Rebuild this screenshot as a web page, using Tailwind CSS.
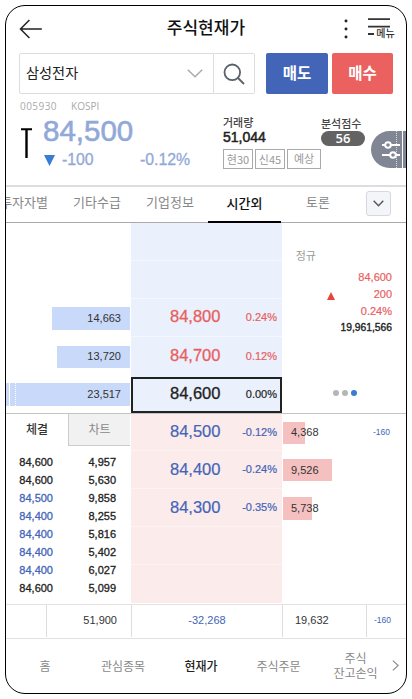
<!DOCTYPE html>
<html lang="ko">
<head>
    <meta charset="UTF-8">
    <meta name="viewport" content="width=device-width, initial-scale=1.0">
    <title>주식현재가</title>
    <script src="https://cdn.jsdelivr.net/npm/@tailwindcss/browser@4"></script>
</head>
<body class="bg-white font-['Liberation_Sans','Noto_Sans_CJK_KR',sans-serif]">
    <div class="ml-[5px] mt-[5px] w-[402px] h-[689px] border border-black rounded-[20px] overflow-hidden flex flex-col whitespace-nowrap leading-none text-[#333]">

        <!-- Header -->
        <header class="h-[47px] shrink-0 flex items-center pl-[13px] pr-[9px] pb-[2px]">
            <svg class="w-6 h-5" viewBox="0 0 24 20" fill="none" stroke="#222" stroke-width="1.5"><path d="M10.5 1 1.5 10l9 9M1.5 10H23"/></svg>
            <h1 class="ml-[124px] w-[81px] text-[17px] font-medium text-[#111]">주식현재가</h1>
            <svg class="ml-[97px] w-1 h-5" viewBox="0 0 4 20" fill="#222"><circle cx="2" cy="2" r="1.5"/><circle cx="2" cy="10" r="1.5"/><circle cx="2" cy="18" r="1.5"/></svg>
            <div class="ml-[20px] w-[29px] flex flex-col">
                <svg class="w-[22px] h-[10px]" viewBox="0 0 22 10" fill="none" stroke="#333" stroke-width="1.7"><path d="M0 1.2h22M0 8.7h22"/></svg>
                <div class="flex items-center mt-px">
                    <span class="w-[6px] h-[1.5px] bg-[#333]"></span>
                    <span class="ml-[2px] text-[10px] font-medium">메뉴</span>
                </div>
            </div>
        </header>

        <!-- Search and order buttons -->
        <div class="h-[41px] shrink-0 flex pl-[13px]">
            <div class="w-[195px] border border-[#ddd] rounded-l-[2px] flex items-center justify-between pl-[6px] pr-[10px]">
                <span class="text-[14.2px] text-[#222]">삼성전자</span>
                <svg class="w-4 h-[9px]" viewBox="0 0 16 9" fill="none" stroke="#aaa" stroke-width="1.5"><path d="m.8.8 7.2 7 7.2-7"/></svg>
            </div>
            <div class="w-[41px] border border-l-0 border-[#ddd] rounded-r-[2px] flex items-center justify-center">
                <svg class="w-[22px] h-[22px]" viewBox="0 0 22 22" fill="none" stroke="#5b606b" stroke-width="1.8"><circle cx="9.3" cy="9.3" r="7.8"/><path d="m15 15 6 6"/></svg>
            </div>
            <button class="ml-[11px] w-[62px] rounded-[2px] bg-[#4265b8] text-white text-[15.5px] font-bold">매도</button>
            <button class="ml-1 w-[61px] rounded-[2px] bg-[#ea615f] text-white text-[15.5px] font-bold">매수</button>
        </div>

        <!-- Quote summary -->
        <section class="h-[91px] shrink-0 flex pl-[14px]">
            <div class="w-[203px]">
                <div class="mt-[6px] h-3 flex items-center gap-[14px] text-[10px] text-[#aaa] font-['Open_Sans','Noto_Sans',sans-serif]"><span class="tracking-[0.45px]">005930</span><span>KOSPI</span></div>
                <div class="flex">
                    <svg class="mt-[16px] ml-px w-[11px] h-[30px]" viewBox="0 0 11 30" fill="none" stroke="#000"><path d="M0 1.2h11" stroke-width="2"/><path d="M5.5 1v29" stroke-width="2.4"/></svg>
                    <div class="ml-[11px] mt-[3px] text-[#92a9d8]">
                        <div class="text-[29.5px] h-[32px] flex items-center [-webkit-text-stroke:0.6px]">84,500</div>
                        <div class="flex items-center h-[22px] mt-[2px] text-[15.8px] [-webkit-text-stroke:0.3px]">
                            <svg class="ml-[1px] w-[11px] h-[11px]" viewBox="0 0 11 11" fill="#377cd6"><path d="M0 0h11L5.5 11z"/></svg>
                            <span class="ml-[7px] w-[31px]">-100</span>
                            <span class="ml-[47px]">-0.12%</span>
                        </div>
                    </div>
                </div>
            </div>
            <div class="w-[98px] pt-[23px]">
                <div class="h-[12px] flex items-center text-[11px] font-medium text-[#444]">거래량</div>
                <div class="h-4 flex items-center text-[14px] text-[#222] [-webkit-text-stroke:0.5px]">51,044</div>
                <div class="mt-[4px] flex gap-[2px] text-[11px] text-[#999]">
                    <span class="w-[34px] h-[20px] border border-[#aaa] flex items-center justify-center font-['Noto_Sans_CJK_KR',sans-serif]">현30</span>
                    <span class="w-[34px] h-[20px] border border-[#aaa] flex items-center justify-center font-['Noto_Sans_CJK_KR',sans-serif]">신45</span>
                    <span class="w-[34px] h-[20px] shrink-0 border border-[#aaa] flex items-center justify-center">예상</span>
                </div>
            </div>
            <div class="w-[49px] pt-[24px]">
                <div class="h-[12px] flex items-center text-[11px] font-medium text-[#444]">분석점수</div>
                <div class="mt-[1px] w-[44px] h-[15px] rounded-full bg-[#636363] text-white text-[13px] font-semibold font-['Open_Sans',sans-serif] flex items-center justify-center">56</div>
            </div>
            <div class="ml-[1px] mt-[37px] w-[35px] h-[37px] shrink-0 relative rounded-l-full bg-[#818694] flex items-center">
                <svg class="ml-[10px] w-[21px] h-5 shrink-0" viewBox="0 0 21 20" fill="none" stroke="#fff" stroke-width="2"><path d="M1 5h3M10 5h9M1 15h8M15 15h4"/><circle cx="7" cy="5" r="2.8"/><circle cx="12" cy="15" r="2.8"/></svg>
                <span class="absolute left-[25px] inset-y-0 border-l border-dotted border-white/70"></span>
                <span class="absolute left-[31px] inset-y-0 w-px bg-white"></span>
            </div>
        </section>

        <!-- Tabs -->
        <nav class="h-[38px] shrink-0 border-t-2 border-[#ddd] border-b border-b-[#aaa] flex text-[13px] text-[#888]">
            <span class="w-[42px] flex items-center justify-end pb-1">투자자별</span>
            <span class="w-[98px] flex items-center justify-center pb-1">기타수급</span>
            <span class="w-[48px] flex items-center justify-center pb-1">기업정보</span>
            <span class="ml-[14px] w-[73px] h-[36px] border-b-2 border-black flex items-center justify-center pb-[2px] font-medium text-[#111]">시간외</span>
            <span class="w-[74px] flex items-center justify-center pb-1">토론</span>
            <span class="ml-[11px] mt-[4px] w-[25px] h-[25px] border border-[#d5d8e0] rounded-[3px] bg-[#f4f5f9] flex items-center justify-center">
                <svg class="w-[11px] h-[7px]" viewBox="0 0 11 7" fill="none" stroke="#555" stroke-width="1.4"><path d="m.7.7 4.8 5 4.8-5"/></svg>
            </span>
        </nav>

        <!-- Ask side -->
        <section class="h-[191px] shrink-0 border-b border-[#c4c4c4] flex text-[11px]">
            <div class="w-[125px] pt-[76px]">
                <div class="h-[38px] flex items-center justify-end pr-px"><span class="w-[78px] h-[23px] bg-[#c9d9f9] flex items-center justify-end pr-[9px]">14,663</span></div>
                <div class="h-[39px] flex items-center justify-end pr-px"><span class="w-[73px] h-[22px] bg-[#c9d9f9] flex items-center justify-end pr-[9px]">13,720</span></div>
                <div class="h-[37px] flex items-center justify-end pr-px">
                    <span class="relative w-full h-[23px] bg-[#c9d9f9] flex items-center justify-end pr-[9px]">23,517
                        <span class="absolute left-[3px] inset-y-0 w-px bg-white"></span>
                        <span class="absolute left-[9px] inset-y-0 border-l border-dotted border-white"></span>
                    </span>
                </div>
            </div>
            <div class="w-[151px] bg-[#eaf1fc]">
                <div class="h-[38px] border-b border-[#f4f8fe]"></div>
                <div class="h-[38px] border-b border-[#f4f8fe]"></div>
                <div class="h-[38px] border-b border-[#f4f8fe] flex items-center justify-between pl-[39px] pr-[5px] text-[#e8605e]"><span class="pb-[2px] text-[16.5px] [-webkit-text-stroke:0.3px]">84,800</span><span class="[-webkit-text-stroke:0.2px]">0.24%</span></div>
                <div class="h-[39px] flex items-center justify-between pl-[39px] pr-[5px] text-[#e8605e]"><span class="pb-[2px] text-[16.5px] [-webkit-text-stroke:0.3px]">84,700</span><span class="[-webkit-text-stroke:0.2px]">0.12%</span></div>
                <div class="mt-px h-[36px] border-2 border-[#222] flex items-center justify-between pl-[37px] pr-[3px] text-[#222]"><span class="pb-[3px] text-[16.5px] [-webkit-text-stroke:0.3px]">84,600</span><span class="pb-[2px] [-webkit-text-stroke:0.2px]">0.00%</span></div>
            </div>
            <div class="w-[110px] flex flex-col items-end text-[#e8605e] [-webkit-text-stroke:0.2px]">
                <div class="mt-[27px] mr-[76px] h-[13px] flex items-center text-[11px] text-[#999] [-webkit-text-stroke:0px]">정규</div>
                <div class="mt-[6px] h-[17px] flex items-center">84,600</div>
                <div class="h-[17px] flex items-center">
                    <svg class="mr-[39px] mt-[2px] w-2 h-2" viewBox="0 0 8 8" fill="#e8433f"><path d="M4 0l4 8H0z"/></svg>200
                </div>
                <div class="h-[17px] flex items-center">0.24%</div>
                <div class="h-[17px] flex items-center text-[#222] text-[10.3px] [-webkit-text-stroke:0.35px]">19,961,566</div>
                <div class="mt-[53px] mr-[35px] flex gap-[3px]">
                    <span class="size-[6px] rounded-full bg-[#b5b5b5]"></span>
                    <span class="size-[6px] rounded-full bg-[#b5b5b5]"></span>
                    <span class="size-[6px] rounded-full bg-[#377cd6]"></span>
                </div>
            </div>
        </section>

        <!-- Bid side -->
        <section class="h-[189px] shrink-0 flex text-[11px]">
            <div class="w-[125px]">
                <div class="flex h-[32px] text-[12px] pr-px">
                    <span class="w-[62px] flex items-center justify-center font-medium">체결</span>
                    <span class="w-[62px] border-l border-b border-[#ccc] bg-[#f1f1f1] text-[#888] flex items-center justify-center">차트</span>
                </div>
                <!-- Executions -->
                <div class="mt-[7px] grid grid-cols-[47px_63px] auto-rows-[18.1px] items-center text-right text-[#222] [-webkit-text-stroke:0.3px]">
                    <span>84,600</span><span>4,957</span>
                    <span>84,600</span><span>5,630</span>
                    <span class="text-[#4265b8]">84,500</span><span>9,858</span>
                    <span class="text-[#4265b8]">84,400</span><span>8,255</span>
                    <span class="text-[#4265b8]">84,400</span><span>5,816</span>
                    <span class="text-[#4265b8]">84,400</span><span>5,402</span>
                    <span class="text-[#4265b8]">84,400</span><span>6,027</span>
                    <span>84,600</span><span>5,099</span>
                </div>
            </div>
            <div class="w-[151px] bg-[#fcebeb] text-[#4265b8] [-webkit-text-stroke:0.2px]">
                <div class="h-[37px] border-b border-[#fef3f3] flex items-center justify-between pl-[39px] pr-[5px]"><span class="pb-[2px] text-[16.5px]">84,500</span><span>-0.12%</span></div>
                <div class="h-[38px] border-b border-[#fef3f3] flex items-center justify-between pl-[39px] pr-[5px]"><span class="pb-px text-[16.5px]">84,400</span><span>-0.24%</span></div>
                <div class="h-[38px] border-b border-[#fef3f3] flex items-center justify-between pl-[39px] pr-[5px]"><span class="pb-px text-[16.5px]">84,300</span><span>-0.35%</span></div>
                <div class="h-[38px] border-b border-[#fef3f3]"></div>
            </div>
            <div class="w-[124px] pl-px">
                <div class="h-[37px] flex items-center">
                    <div class="w-[22px] h-[22px] bg-[#f5c0c0] flex items-center pl-2">4,368</div>
                    <span class="ml-auto mr-[16px] text-[8.5px] text-[#4265b8]">-160</span>
                </div>
                <div class="h-[38px] flex items-center"><div class="w-[49px] h-[22px] bg-[#f5c0c0] flex items-center pl-2">9,526</div></div>
                <div class="h-[38px] flex items-center"><div class="w-[29px] h-[23px] bg-[#f5c0c0] flex items-center pl-2">5,738</div></div>
            </div>
        </section>

        <!-- Totals -->
        <div class="h-[35px] shrink-0 border-y border-[#e2e2e2] flex text-[11px] mt-px">
            <span class="w-[41px] h-[32px] border-r border-[#ddd]"></span>
            <span class="w-[85px] h-[32px] border-r border-[#ddd] flex items-center justify-end pr-[14px] pb-[2px]">51,900</span>
            <span class="w-[151px] h-[32px] border-r border-[#ddd] flex items-center justify-center pb-[2px] text-[#4265b8]">-32,268</span>
            <span class="w-[84px] h-[32px] border-r border-[#ddd] flex items-center pl-[12px] pb-[2px]">19,632</span>
            <span class="h-[32px] flex items-center pl-[7px] pb-[2px] text-[8.5px] text-[#4265b8]">-160</span>
        </div>

        <!-- Bottom navigation -->
        <nav class="h-[55px] shrink-0 flex items-center text-[12px] text-[#888]">
            <span class="w-[78px] text-center">홈</span>
            <span class="w-[78px] text-center">관심종목</span>
            <span class="w-[78px] text-center font-medium text-[#222]">현재가</span>
            <span class="w-[77px] text-center">주식주문</span>
            <span class="w-[77px] text-center leading-[15px]">주식<br>잔고손익</span>
            <svg class="-ml-[2px] -mt-[3px] w-[7px] h-[11px]" viewBox="0 0 7 11" fill="none" stroke="#888" stroke-width="1.1"><path d="m.8.6 5.4 4.9-5.4 4.9"/></svg>
        </nav>
    </div>
</body>
</html>
